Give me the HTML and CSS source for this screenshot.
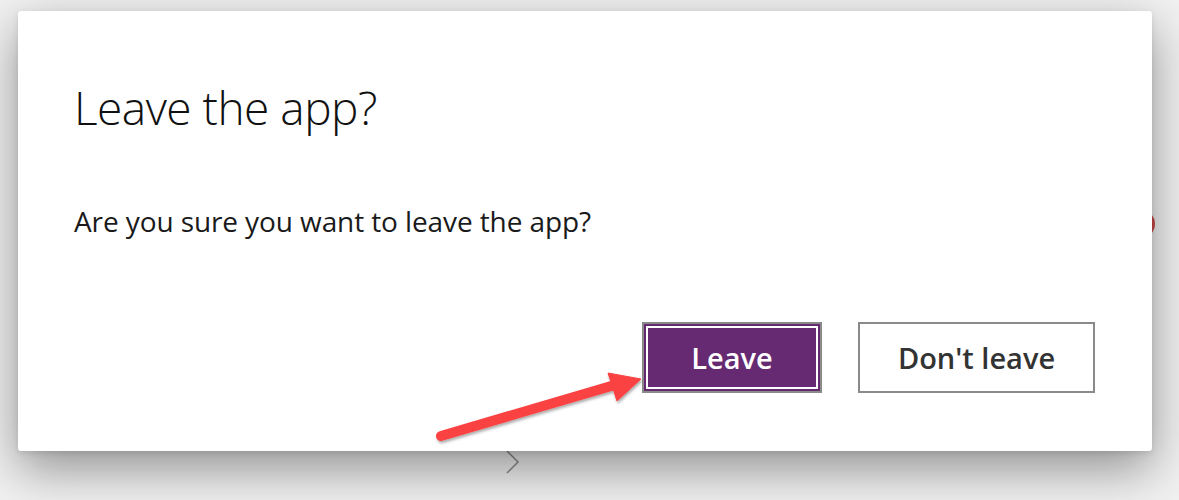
FILE: index.html
```html
<!DOCTYPE html>
<html lang="en">
<head>
<meta charset="utf-8">
<title>Leave the app?</title>
<link rel="stylesheet" href="styles.css">
</head>
<body>
<div class="stage">
  <span class="bg-dot"></span>
  <svg class="bg-chevron" width="20" height="30" viewBox="0 0 20 30"><path d="M3 3 L14 14 L3 25" fill="none" stroke="#8c8c8c" stroke-width="1.5"/></svg>
  <section class="dialog">
    <h1 class="dialog-title">Leave the app?</h1>
    <p class="dialog-body">Are you sure you want to leave the app?</p>
    <div class="dialog-actions">
      <button class="btn btn-primary">Leave</button>
      <button class="btn btn-secondary">Don't leave</button>
    </div>
  </section>
  <svg class="annot-arrow" width="1179" height="500" viewBox="0 0 1179 500">
    <defs>
      <filter id="sh" x="-20%" y="-50%" width="140%" height="200%">
        <feDropShadow dx="1" dy="2" stdDeviation="1.5" flood-color="#000" flood-opacity="0.35"/>
      </filter>
    </defs>
    <g filter="url(#sh)" fill="#fb4343" stroke="#fb4343">
      <line x1="441" y1="436" x2="618" y2="384" stroke-width="10" stroke-linecap="round"/>
      <polygon points="608,373 641,379 617,401" stroke-width="1" stroke-linejoin="round"/>
    </g>
  </svg>
</div>
</body>
</html>
```
FILE: styles.css
```css
html, body {
  margin: 0;
  padding: 0;
}
body {
  background: #f1f1f1;
  font-family: "Open Sans", "Noto Sans", sans-serif;
  overflow: hidden;
}
.stage {
  position: relative;
  width: 1179px;
  height: 500px;
  padding: 11px 0 0 18px;
  box-sizing: border-box;
}
.bg-dot {
  position: absolute;
  left: 1127px;
  top: 210px;
  width: 28px;
  height: 28px;
  border-radius: 50%;
  background: #d24a4a;
}
.bg-chevron {
  position: absolute;
  left: 504px;
  top: 448px;
}
.annot-arrow {
  position: absolute;
  left: 0;
  top: 0;
  pointer-events: none;
}
.dialog {
  position: relative;
  width: 1134px;
  height: 440px;
  box-sizing: border-box;
  background: #fff;
  border-radius: 3px;
  box-shadow: 0 18px 50px rgba(0, 0, 0, 0.4), 0 2px 6px rgba(0, 0, 0, 0.1);
  padding: 67px 57px 58px 56px;
  display: flex;
  flex-direction: column;
}
.dialog-title {
  margin: 0;
  font-weight: 300;
  font-size: 46px;
  line-height: 58px;
  color: #111;
  letter-spacing: -0.5px;
}
.dialog-body {
  margin: 68px 0 0 0;
  font-size: 28px;
  line-height: 34px;
  letter-spacing: -0.1px;
  color: #1a1a1a;
}
.dialog-actions {
  margin-top: auto;
  display: flex;
  justify-content: flex-end;
  gap: 36px;
}
.btn {
  height: 71px;
  box-sizing: border-box;
  font-family: inherit;
  font-size: 29px;
  font-weight: 600;
  border: 2px solid #8a8a8a;
  border-radius: 0;
  padding: 0;
  cursor: pointer;
}
.btn-primary {
  width: 180px;
  background: #652a72;
  color: #fff;
  box-shadow: inset 0 0 0 2px #652a72, inset 0 0 0 4px #fff;
}
.btn-secondary {
  width: 237px;
  background: #fff;
  color: #333;
}
```
